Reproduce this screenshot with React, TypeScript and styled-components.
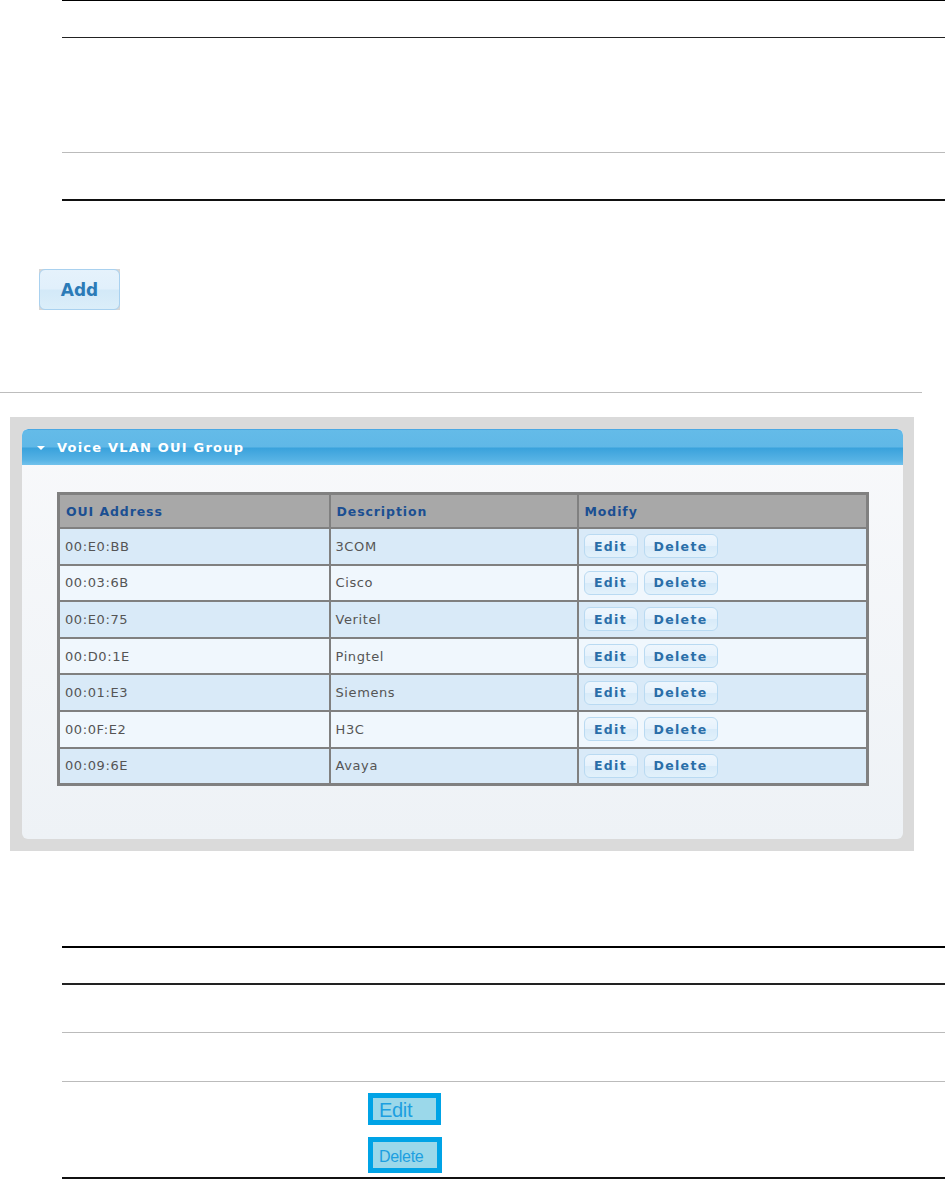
import React from "react";
import styled, { createGlobalStyle } from "styled-components";

const Global = createGlobalStyle`
  html, body { margin: 0; padding: 0; background: #ffffff; }
  body { font-family: "DejaVu Sans", Verdana, sans-serif; }
`;

const Page = styled.div`
  width: 945px;
  height: 1179px;
  overflow: hidden;
  display: flex;
  flex-direction: column;
`;

const RuleTable = styled.div`
  margin-left: 62px;
  display: flex;
  flex-direction: column;
  border-bottom: 2px solid #111;
`;

const RuleRow = styled.div<{ $h: number; $line: string; $w?: number }>`
  height: ${(p) => p.$h}px;
  border-top: ${(p) => p.$w ?? 1}px solid ${(p) => p.$line};
  box-sizing: border-box;
  display: flex;
  align-items: center;
`;

const ImgBtnCell = styled.div`
  padding-left: 306px;
  display: flex;
  flex-direction: column;
  gap: 12px;
  padding-top: 7px;
`;

const ImgBtn = styled.div<{ $w: number; $h: number; $fs: number }>`
  width: ${(p) => p.$w}px;
  height: ${(p) => p.$h}px;
  box-sizing: border-box;
  border: 5px solid #00a3e6;
  background: #9bd8ea;
  color: #1d9fe0;
  font-family: "Liberation Sans", Arial, sans-serif;
  font-size: ${(p) => p.$fs}px;
  display: flex;
  align-items: center;
  padding: 3px 0 0 6px;
  letter-spacing: -0.3px;
`;

const AddWrap = styled.div`
  margin-top: 68px;
  margin-left: 39px;
  width: 81px;
  height: 41px;
  background: #d6d6d6;
  display: flex;
`;

const AddButton = styled.button`
  all: unset;
  box-sizing: border-box;
  width: 100%;
  height: 100%;
  border: 1px solid #a9d1ef;
  border-radius: 6px;
  background: linear-gradient(#e5f2fc 0%, #e1f0fb 48%, #d3e9f8 52%, #dbeef9 100%);
  color: #2b7bb7;
  font-family: "DejaVu Sans", Verdana, sans-serif;
  font-weight: bold;
  font-size: 17px;
  display: flex;
  align-items: center;
  justify-content: center;
  padding-top: 1px;
`;

const Divider = styled.div`
  margin-top: 82px;
  width: 922px;
  height: 1px;
  background: #bdbdbd;
`;

const Frame = styled.div`
  margin-top: 24px;
  margin-left: 10px;
  width: 904px;
  height: 434px;
  box-sizing: border-box;
  background: #dadada;
  padding: 12px 11px 12px 12px;
  display: flex;
`;

const Panel = styled.div`
  flex: 1;
  border-radius: 6px;
  background: linear-gradient(#f8f9fb, #eef2f6);
  display: flex;
  flex-direction: column;
  overflow: hidden;
`;

const PanelHeader = styled.div`
  height: 36px;
  box-sizing: border-box;
  border-radius: 6px 6px 0 0;
  border-top: 1px solid #4aa8e3;
  background: linear-gradient(
    #64bbe8 0%,
    #60b8e7 48%,
    #3aa2dc 52%,
    #56b2e4 85%,
    #72c2ec 100%
  );
  display: flex;
  align-items: center;
  padding-left: 15px;
  gap: 12px;
  color: #ffffff;
  font-weight: bold;
  font-size: 13px;
  letter-spacing: 1.2px;
`;

const Caret = styled.span`
  width: 0;
  height: 0;
  border-left: 4px solid transparent;
  border-right: 4px solid transparent;
  border-top: 4px solid #ffffff;
  margin-top: 1px;
`;

const PanelBody = styled.div`
  padding: 27px 0 0 35px;
`;

const Grid = styled.table`
  border-collapse: collapse;
  width: 809px;
  table-layout: fixed;
  border: 3px solid #808080;
`;

const Th = styled.th`
  background: #a8a8a8;
  color: #1b4f92;
  font-size: 12.5px;
  font-weight: bold;
  letter-spacing: 0.9px;
  text-align: left;
  height: 32px;
  padding: 0 0 0 6px;
  border: 2px solid #808080;
`;

const Td = styled.td<{ $odd: boolean }>`
  background: ${(p) => (p.$odd ? "#d9eaf8" : "#f0f7fd")};
  color: #555555;
  font-family: "DejaVu Sans", Verdana, sans-serif;
  font-weight: normal;
  font-size: 13px;
  letter-spacing: 0.6px;
  height: 34.6px;
  padding: 0 0 0 5px;
  border: 2px solid #808080;
`;

const BtnRow = styled.div`
  display: flex;
  gap: 6px;
`;

const SmallBtn = styled.button<{ $w: number }>`
  all: unset;
  box-sizing: border-box;
  width: ${(p) => p.$w}px;
  height: 24px;
  border: 1px solid #b9daf2;
  border-radius: 6px;
  background: linear-gradient(#eef6fd 0%, #e6f2fc 48%, #d8ebf9 52%, #e2f1fb 100%);
  color: #2a6ea8;
  font-family: "DejaVu Sans", Verdana, sans-serif;
  font-weight: bold;
  font-size: 12.5px;
  letter-spacing: 1.3px;
  display: flex;
  align-items: center;
  justify-content: center;
`;

const BottomTable = styled(RuleTable)`
  margin-top: 95px;
`;

const rows = [
  ["00:E0:BB", "3COM"],
  ["00:03:6B", "Cisco"],
  ["00:E0:75", "Veritel"],
  ["00:D0:1E", "Pingtel"],
  ["00:01:E3", "Siemens"],
  ["00:0F:E2", "H3C"],
  ["00:09:6E", "Avaya"],
];

export default function App() {
  return (
    <Page>
      <Global />
      <RuleTable>
        <RuleRow $h={37} $line="#000" />
        <RuleRow $h={115} $line="#222" />
        <RuleRow $h={47} $line="#bbb" />
      </RuleTable>
      <AddWrap>
        <AddButton>Add</AddButton>
      </AddWrap>
      <Divider />
      <Frame>
        <Panel>
          <PanelHeader>
            <Caret />
            Voice VLAN OUI Group
          </PanelHeader>
          <PanelBody>
            <Grid>
              <colgroup>
                <col style={{ width: 271 }} />
                <col style={{ width: 248 }} />
                <col style={{ width: 290 }} />
              </colgroup>
              <thead>
                <tr>
                  <Th>OUI Address</Th>
                  <Th>Description</Th>
                  <Th>Modify</Th>
                </tr>
              </thead>
              <tbody>
                {rows.map(([a, d], i) => (
                  <tr key={a}>
                    <Td $odd={i % 2 === 0}>{a}</Td>
                    <Td $odd={i % 2 === 0}>{d}</Td>
                    <Td $odd={i % 2 === 0}>
                      <BtnRow>
                        <SmallBtn $w={54}>Edit</SmallBtn>
                        <SmallBtn $w={74}>Delete</SmallBtn>
                      </BtnRow>
                    </Td>
                  </tr>
                ))}
              </tbody>
            </Grid>
          </PanelBody>
        </Panel>
      </Frame>
      <BottomTable>
        <RuleRow $h={37} $line="#000" $w={2} />
        <RuleRow $h={49} $line="#222" $w={2} />
        <RuleRow $h={49} $line="#bbb" $w={1} />
        <RuleRow $h={96} $line="#bbb" $w={1}>
          <ImgBtnCell>
            <ImgBtn $w={73} $h={32} $fs={20}>Edit</ImgBtn>
            <ImgBtn $w={74} $h={36} $fs={16}>Delete</ImgBtn>
          </ImgBtnCell>
        </RuleRow>
      </BottomTable>
    </Page>
  );
}
